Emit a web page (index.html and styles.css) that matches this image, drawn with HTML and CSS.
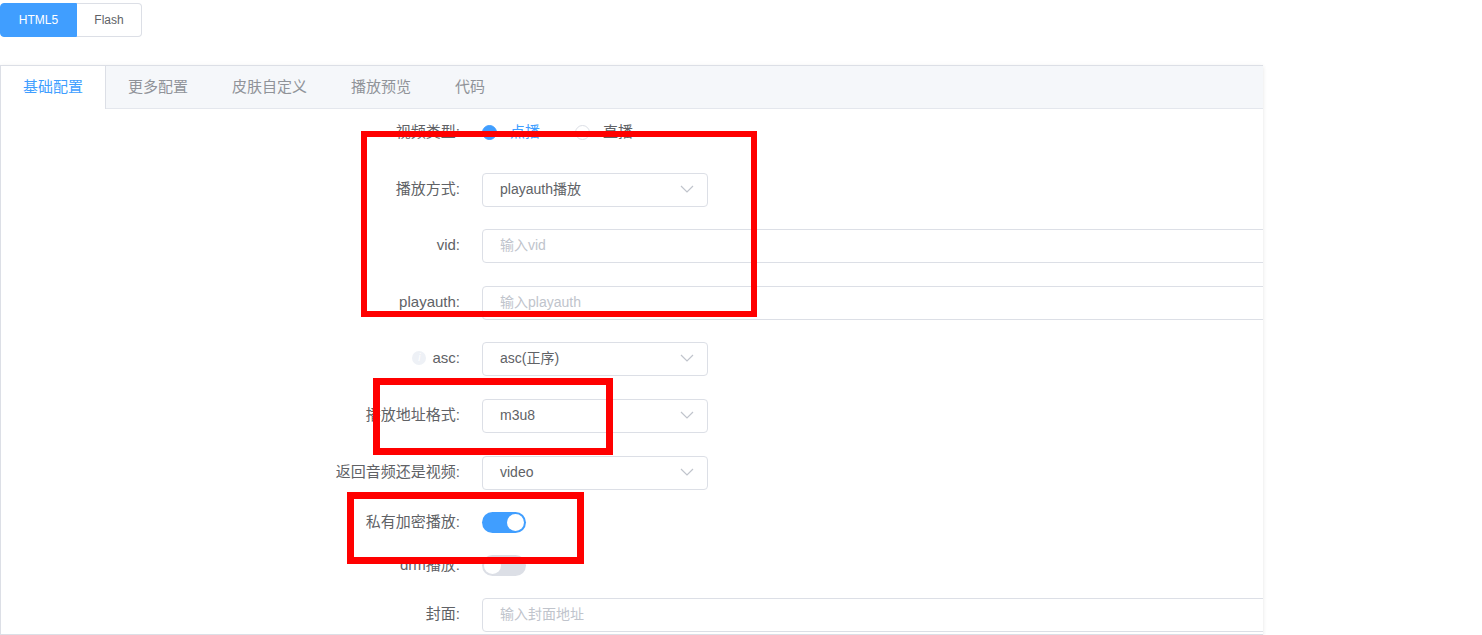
FILE: index.html
```html
<!DOCTYPE html>
<html lang="zh-CN">

<head>
    <meta charset="UTF-8">
    <title>播放器配置</title>
    <link rel="stylesheet" href="styles.css">
</head>

<body>
    <div class="mode-switch">
        <button class="mode mode-active">HTML5</button>
        <button class="mode">Flash</button>
    </div>

    <div class="tabs">
        <div class="tabs-header">
            <div class="tab tab-active">基础配置</div>
            <div class="tab">更多配置</div>
            <div class="tab">皮肤自定义</div>
            <div class="tab">播放预览</div>
            <div class="tab">代码</div>
        </div>

        <div class="tabs-content">
            <form class="config-form">
                <div class="form-item">
                    <label class="form-label">视频类型:</label>
                    <div class="form-control radios">
                        <span class="radio radio-checked"><i class="radio-dot"></i>点播</span>
                        <span class="radio"><i class="radio-dot"></i>直播</span>
                    </div>
                </div>

                <div class="form-item">
                    <label class="form-label">播放方式:</label>
                    <div class="form-control">
                        <div class="select">
                            <span>playauth播放</span>
                            <svg class="arrow" width="14" height="8" viewBox="0 0 14 8"><path d="M1 1l6 6 6-6" fill="none" stroke="#c0c4cc" stroke-width="1.2"/></svg>
                        </div>
                    </div>
                </div>

                <div class="form-item">
                    <label class="form-label">vid:</label>
                    <div class="form-control">
                        <input class="input" type="text" placeholder="输入vid">
                    </div>
                </div>

                <div class="form-item">
                    <label class="form-label">playauth:</label>
                    <div class="form-control">
                        <input class="input" type="text" placeholder="输入playauth">
                    </div>
                </div>

                <div class="form-item">
                    <label class="form-label"><i class="info">i</i>asc:</label>
                    <div class="form-control">
                        <div class="select">
                            <span>asc(正序)</span>
                            <svg class="arrow" width="14" height="8" viewBox="0 0 14 8"><path d="M1 1l6 6 6-6" fill="none" stroke="#c0c4cc" stroke-width="1.2"/></svg>
                        </div>
                    </div>
                </div>

                <div class="form-item">
                    <label class="form-label">播放地址格式:</label>
                    <div class="form-control">
                        <div class="select">
                            <span>m3u8</span>
                            <svg class="arrow" width="14" height="8" viewBox="0 0 14 8"><path d="M1 1l6 6 6-6" fill="none" stroke="#c0c4cc" stroke-width="1.2"/></svg>
                        </div>
                    </div>
                </div>

                <div class="form-item">
                    <label class="form-label">返回音频还是视频:</label>
                    <div class="form-control">
                        <div class="select">
                            <span>video</span>
                            <svg class="arrow" width="14" height="8" viewBox="0 0 14 8"><path d="M1 1l6 6 6-6" fill="none" stroke="#c0c4cc" stroke-width="1.2"/></svg>
                        </div>
                    </div>
                </div>

                <div class="form-item form-item-switch">
                    <label class="form-label">私有加密播放:</label>
                    <div class="form-control">
                        <span class="switch switch-on"></span>
                    </div>
                </div>

                <div class="form-item form-item-switch">
                    <label class="form-label">drm播放:</label>
                    <div class="form-control">
                        <span class="switch"></span>
                    </div>
                </div>

                <div class="form-item">
                    <label class="form-label">封面:</label>
                    <div class="form-control">
                        <input class="input" type="text" placeholder="输入封面地址">
                    </div>
                </div>
            </form>
        </div>
    </div>

    <!-- annotation boxes drawn over the screenshot -->
    <div class="mark mark-play"></div>
    <div class="mark mark-format"></div>
    <div class="mark mark-private"></div>
</body>

</html>
```

FILE: styles.css
```css
body {
    margin: 0;
    font-family: "Liberation Sans", "Noto Sans CJK SC", sans-serif;
    line-height: 20px;
    background-color: #fff;
    color: #606266;
    overflow: hidden;
}

.mode-switch {
    display: flex;
    padding-top: 3px;
}

.mode {
    height: 34px;
    width: 65px;
    padding: 0;
    font-family: inherit;
    font-size: 12px;
    color: #606266;
    background-color: #fff;
    border: 1px solid #dcdfe6;
    border-left: none;
    border-radius: 0 4px 4px 0;
}

.mode-active {
    width: 77px;
    color: #fff;
    background-color: #409eff;
    border: 1px solid #409eff;
    border-radius: 4px 0 0 4px;
}

.tabs {
    width: 1263px;
    margin-top: 28px;
    border: 1px solid #dcdfe6;
    border-right: none;
    box-sizing: border-box;
    overflow: hidden;
    box-shadow: 0 2px 4px rgba(0, 0, 0, 0.08), 0 0 6px rgba(0, 0, 0, 0.03);
}

.tabs-header {
    display: flex;
    height: 42px;
    background-color: #f5f7fa;
    border-bottom: 1px solid #e4e7ed;
}

.tab {
    height: 42px;
    line-height: 42px;
    padding: 0 22px;
    font-size: 15px;
    color: #909399;
}

.tab-active {
    height: 43px;
    color: #409eff;
    background-color: #fff;
    border-right: 1px solid #dcdfe6;
}

.tabs-content {
    padding-top: 7px;
    height: 518px;
}

.form-item {
    display: flex;
    align-items: center;
    height: 34px;
    margin-bottom: 22.6px;
}

.form-item-switch {
    height: 21px;
    margin-bottom: 22px;
}

.form-label {
    display: flex;
    align-items: center;
    justify-content: flex-end;
    width: 459px;
    flex: none;
    padding-bottom: 2px;
    font-size: 15px;
    color: #606266;
}

.form-control {
    margin-left: 22px;
    display: flex;
    align-items: center;
}

.info {
    width: 14px;
    height: 14px;
    margin-right: 6px;
    border-radius: 50%;
    background-color: #eef1f6;
    color: #fff;
    font-size: 10px;
    font-style: italic;
    line-height: 14px;
    text-align: center;
}

.radios {
    gap: 35px;
    padding-bottom: 2px;
}

.radio {
    display: flex;
    align-items: center;
    font-size: 15px;
    color: #606266;
}

.radio-dot {
    width: 15px;
    height: 15px;
    margin-right: 13px;
    border: 1px solid #dcdfe6;
    border-radius: 50%;
    box-sizing: border-box;
    background-color: #fff;
}

.radio-checked {
    color: #409eff;
}

.radio-checked .radio-dot {
    border-color: #409eff;
    background-color: #409eff;
}

.select {
    display: flex;
    align-items: center;
    justify-content: space-between;
    width: 226px;
    height: 34px;
    padding: 0 13px 2px 17px;
    box-sizing: border-box;
    border: 1px solid #dcdfe6;
    border-radius: 4px;
    font-size: 14px;
    color: #606266;
}

.input {
    width: 900px;
    height: 34px;
    padding: 0 17px 2px;
    box-sizing: border-box;
    border: 1px solid #dcdfe6;
    border-radius: 4px;
    font-family: inherit;
    font-size: 14px;
    color: #606266;
    outline: none;
}

.input::placeholder {
    color: #c0c4cc;
}

.switch {
    position: relative;
    display: block;
    width: 44px;
    height: 21px;
    border-radius: 11px;
    background-color: #dcdfe6;
}

.switch::after {
    content: "";
    position: absolute;
    top: 2px;
    left: 2px;
    width: 17px;
    height: 17px;
    border-radius: 50%;
    background-color: #fff;
}

.switch-on {
    background-color: #409eff;
}

.switch-on::after {
    left: 25px;
}

.mark {
    position: absolute;
    box-sizing: border-box;
    border: 7px solid #ff0000;
}

.mark-play {
    left: 361px;
    top: 131px;
    width: 396px;
    height: 186px;
    border-width: 6px;
}

.mark-format {
    left: 373px;
    top: 378px;
    width: 240px;
    height: 77px;
}

.mark-private {
    left: 347px;
    top: 492px;
    width: 237px;
    height: 72px;
}
```
